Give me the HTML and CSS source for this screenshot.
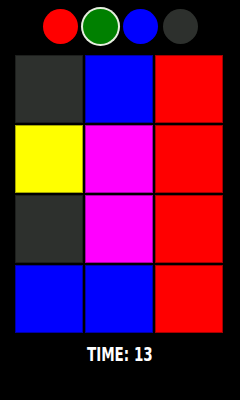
FILE: index.html
```html
<!DOCTYPE html>
<html>
<head>
<meta charset="utf-8">
<link rel="stylesheet" href="styles.css">
</head>
<body>
<div class="app">
  <div class="palette">
    <div class="dot red"></div>
    <div class="dot green selected"></div>
    <div class="dot blue"></div>
    <div class="dot gray"></div>
  </div>
  <div class="board">
    <div class="cell gray"></div>
    <div class="cell blue"></div>
    <div class="cell red"></div>
    <div class="cell yellow"></div>
    <div class="cell magenta"></div>
    <div class="cell red"></div>
    <div class="cell gray"></div>
    <div class="cell magenta"></div>
    <div class="cell red"></div>
    <div class="cell blue"></div>
    <div class="cell blue"></div>
    <div class="cell red"></div>
  </div>
  <div class="timer">TIME: 13</div>
</div>
</body>
</html>
```
FILE: styles.css
```css
html, body {
  margin: 0;
  padding: 0;
  background: #000;
  width: 240px;
  height: 400px;
  overflow: hidden;
}
.app {
  display: flex;
  flex-direction: column;
  align-items: flex-start;
}
.palette {
  display: flex;
  gap: 5px;
  margin: 9px 0 0 43px;
}
.dot {
  width: 35px;
  height: 35px;
  border-radius: 50%;
}
.dot.selected {
  box-shadow: 0 0 0 2px #e6eedf;
}
.board {
  margin: 11px 0 0 15px;
  display: grid;
  grid-template-columns: repeat(3, 68px);
  grid-auto-rows: 68px;
  gap: 2px;
}
.cell {
  box-sizing: border-box;
  border: 1px solid rgba(0,0,0,0.35);
}
.red { background: #ff0000; }
.green { background: #008000; }
.blue { background: #0000ff; }
.gray { background: #2d302d; }
.yellow { background: #ffff00; }
.magenta { background: #ff00ff; }
.timer {
  align-self: center;
  margin-top: 9px;
  color: #fff;
  font-family: "DejaVu Sans Condensed", "DejaVu Sans", sans-serif;
  font-weight: bold;
  font-size: 20px;
  line-height: 24px;
  transform: scaleX(0.75);
}
```
